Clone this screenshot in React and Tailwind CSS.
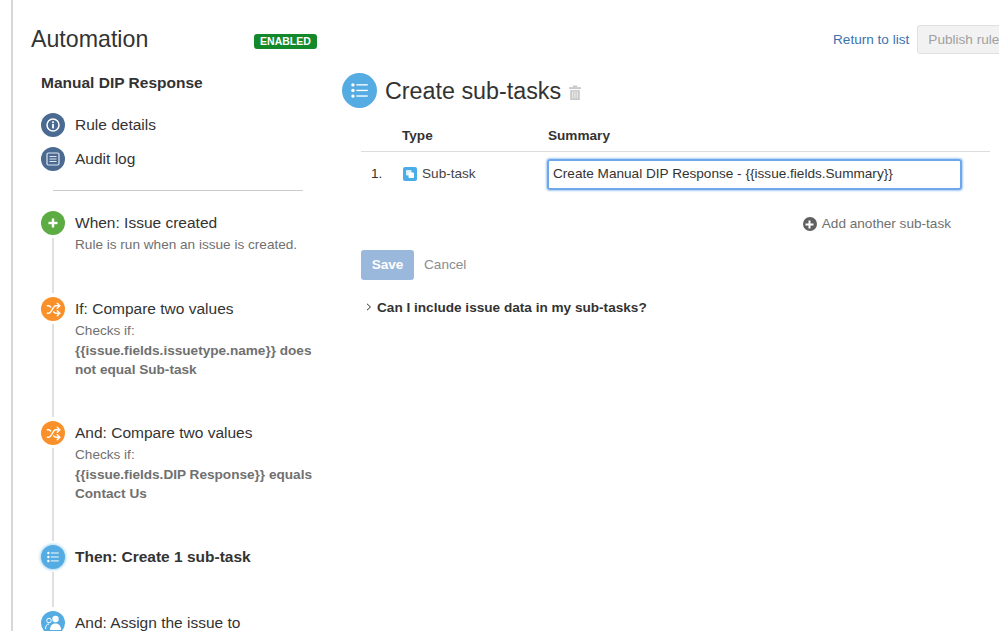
import React from 'react';
import { Shuffle } from 'lucide-react';

/* ---------- icons ---------- */
const ListIcon = ({ size = 14 }) => (
  <svg width={size} height={size} viewBox="0 0 14 14" fill="white">
    <circle cx="1.6" cy="2.4" r="1.4" />
    <circle cx="1.6" cy="7" r="1.4" />
    <circle cx="1.6" cy="11.6" r="1.4" />
    <rect x="4.4" y="1.8" width="9.4" height="1.1" />
    <rect x="4.4" y="6.4" width="9.4" height="1.1" />
    <rect x="4.4" y="11" width="9.4" height="1.1" />
  </svg>
);

const InfoIcon = () => (
  <svg width="14" height="14" viewBox="0 0 14 14">
    <circle cx="7" cy="7" r="6" fill="none" stroke="white" strokeWidth="1.5" />
    <rect x="6.1" y="6" width="1.8" height="4.4" fill="white" />
    <rect x="6.1" y="3.4" width="1.8" height="1.7" fill="white" />
  </svg>
);

const LogIcon = () => (
  <svg width="14" height="14" viewBox="0 0 14 14" fill="none" stroke="#dfe6ef">
    <rect x="1" y="1" width="12" height="12" rx="1.5" strokeWidth="1.2" />
    <path d="M3.5 4.5h7M3.5 7h7M3.5 9.5h7" strokeWidth="1.1" />
  </svg>
);

const PlusIcon = () => (
  <svg width="12" height="12" viewBox="0 0 12 12" fill="white">
    <rect x="4.8" y="1.5" width="2.4" height="9" />
    <rect x="1.5" y="4.8" width="9" height="2.4" />
  </svg>
);

const AssignIcon = () => (
  <svg width="18" height="18" viewBox="0 0 18 18">
    <circle cx="11.5" cy="5" r="3.2" fill="white" />
    <path d="M6 16c0-4 2-6.5 5.500-6.500S17 12 17 16z" fill="white" />
    <circle cx="5" cy="6.500" r="2.300" fill="none" stroke="white" />
    <path d="M1.500 15c0-3 1-5 3.500-5" fill="none" stroke="white" />
  </svg>
);

const TrashIcon = () => (
  <svg width="12" height="15" viewBox="0 0 11 14" fill="#c8c8c8">
    <rect x="3.5" y="0.500" width="4" height="1.500" />
    <rect x="0" y="2" width="11" height="1.800" />
    <path d="M1 4.800h9V14H1z" />
    <path d="M3.400 6v6.500M5.500 6v6.500M7.600 6v6.500" stroke="white" strokeWidth="0.700" />
  </svg>
);

const SubTaskIcon = () => (
  <svg width="14" height="14" viewBox="0 0 14 14">
    <rect width="14" height="14" rx="2" fill="#4bade8" />
    <rect x="3" y="3" width="5.500" height="5.500" rx="1" fill="white" fillOpacity="0.800" />
    <rect x="5.500" y="5.500" width="5.500" height="5.500" rx="1" fill="white" />
  </svg>
);

/* ---------- left column ---------- */
const Circle = ({ color, children, glow }) => (
  <div
    className={`w-6 h-6 shrink-0 rounded-full flex items-center justify-center ${color} ${glow ? 'shadow-[0_0_3px_1px_#a9d6f2]' : ''}`}
  >
    {children}
  </div>
);

const NavItem = ({ icon, label }) => (
  <div className="flex items-center gap-[10px] h-6">
    <Circle color="bg-[#4a6a92]">{icon}</Circle>
    <span className="text-[15.5px] text-[#333]">{label}</span>
  </div>
);

const Step = ({ color, icon, title, bold, glow, className, last, children }) => (
  <div className={`flex gap-[10px] ${className}`}>
    <div className="w-6 flex flex-col items-center shrink-0">
      <Circle color={color} glow={glow}>{icon}</Circle>
      {!last && <div className="w-[2px] flex-1 mt-[3px] mb-[4px] bg-[#e0e0e0]" />}
    </div>
    <div className="min-w-0">
      <div className={`text-[15.5px] leading-6 whitespace-nowrap text-[#333] ${bold ? 'font-bold' : ''}`}>{title}</div>
      <div className="text-[13.6px] leading-[19.5px] text-[#707070] whitespace-nowrap">{children}</div>
    </div>
  </div>
);

const shuffle = <Shuffle size={15} color="white" strokeWidth={2.2} />;

const Sidebar = () => (
  <aside className="w-[317px] shrink-0 pl-[28px]">
    <h2 className="text-[15.5px] leading-6 font-bold text-[#333] mt-[17px]">Manual DIP Response</h2>
    <div className="mt-[18px] flex flex-col gap-[10px]">
      <NavItem icon={<InfoIcon />} label="Rule details" />
      <NavItem icon={<LogIcon />} label="Audit log" />
    </div>
    <div className="ml-[12px] w-[250px] mt-[19px] mb-[20px] border-t border-[#cccccc]" />

    <Step color="bg-[#5cab43]" icon={<PlusIcon />} title="When: Issue created" className="h-[86px]">
      Rule is run when an issue is created.
    </Step>
    <Step color="bg-[#f9902a]" icon={shuffle} title="If: Compare two values" className="h-[124px]">
      Checks if:
      <br />
      <b>{'{{issue.fields.issuetype.name}}'} does</b>
      <br />
      <b>not equal Sub-task</b>
    </Step>
    <Step color="bg-[#f9902a]" icon={shuffle} title="And: Compare two values" className="h-[124px]">
      Checks if:
      <br />
      <b>{'{{issue.fields.DIP Response}}'} equals</b>
      <br />
      <b>Contact Us</b>
    </Step>
    <Step color="bg-[#55ace2]" icon={<ListIcon size={12} />} title="Then: Create 1 sub-task" bold glow className="h-[66px]" />
    <Step color="bg-[#55ace2]" icon={<AssignIcon />} title="And: Assign the issue to" last className="h-6" />
  </aside>
);

/* ---------- right panel ---------- */
const Editor = () => (
  <section className="flex-1 min-w-0 pl-[13px] pr-[9px]">
    <div className="flex items-center -ml-[1px] mt-[19px]">
      <div className="w-[35px] h-[35px] rounded-full bg-[#55ace2] flex items-center justify-center">
        <ListIcon size={17} />
      </div>
      <h1 className="ml-[8px] h-[35px] text-[23.3px] leading-[37px] text-[#333]">Create sub-tasks</h1>
      <span className="ml-[8px] mt-[3px] flex"><TrashIcon /></span>
    </div>

    <div className="ml-[18px]">
      <div className="mt-[15px] h-[26px] flex items-center text-[13.6px] font-bold text-[#333]">
        <span className="w-[146px] ml-[41px]">Type</span>
        <span>Summary</span>
      </div>
      <div className="border-t border-[#dddddd] mt-[2px]" />

      <div className="flex items-center mt-[7px] text-[13.6px] text-[#333]">
        <span className="w-[42px] pl-[10px]">1.</span>
        <span className="w-[144px] flex items-center gap-[5px]">
          <SubTaskIcon />
          <span className="text-[#444]">Sub-task</span>
        </span>
        <div className="w-[415px] h-[31px] rounded-[3px] border-2 border-[#6fa8ea] shadow-[0_0_2px_1px_#a8ccf3] flex items-center px-[4px] whitespace-nowrap text-[#333]">
          Create Manual DIP Response - {'{{issue.fields.Summary}}'}
        </div>
      </div>

      <div className="flex justify-end items-center gap-[5px] w-[590px] mt-[24px] h-5 text-[13.6px] text-[#707070]">
        <span className="w-[14px] h-[14px] rounded-full bg-[#606060] flex items-center justify-center">
          <svg width="9" height="9" viewBox="0 0 9 9" fill="white">
            <rect x="3.500" y="0.500" width="2" height="8" />
            <rect x="0.500" y="3.500" width="8" height="2" />
          </svg>
        </span>
        Add another sub-task
      </div>

      <div className="flex items-center mt-[16px] text-[13.6px]">
        <button className="w-[53px] h-[30px] rounded-[3px] bg-[#9ab8dc] text-white font-bold">Save</button>
        <span className="ml-[10px] text-[#8c8c8c]">Cancel</span>
      </div>

      <div className="flex items-center mt-[18px] text-[13.6px] font-bold text-[#333]">
        <svg width="6" height="8" viewBox="0 0 6 8" fill="none" stroke="#333" className="ml-[5px] mr-[5px] -mt-[3px]">
          <path d="M1 0.800 4.500 4 1 7.200" />
        </svg>
        Can I include issue data in my sub-tasks?
      </div>
    </div>
  </section>
);

export default function App() {
  return (
    <div
      className="w-[999px] h-[631px] overflow-hidden bg-white"
      style={{ fontFamily: '"Liberation Sans", Arial, sans-serif' }}
    >
      <div className="ml-[11px] h-full border-l-2 border-[#d8d8d8]">
        {/* Header */}
        <header className="flex items-center h-[54px] pt-[25px] w-[1040px]">
          <h1 className="ml-[18px] text-[23.2px] text-[#333] w-[223px]">Automation</h1>
          <span className="mt-[4px] w-[63px] h-[15px] rounded-[3px] bg-[#14892c] text-white text-[10.5px] font-bold flex items-center justify-center">
            ENABLED
          </span>
          <a className="ml-[516px] mt-[2px] text-[13.6px] text-[#3b73af] whitespace-nowrap">Return to list</a>
          <button className="ml-[8px] h-[29px] w-[110px] text-left pl-[10px] pt-[2px] rounded-[3px] border border-[#e0e0e0] bg-[#f2f2f2] text-[13.6px] text-[#a0a0a0] whitespace-nowrap">
            Publish rule
          </button>
        </header>

        <div className="flex">
          <Sidebar />
          <Editor />
        </div>
      </div>
    </div>
  );
}
